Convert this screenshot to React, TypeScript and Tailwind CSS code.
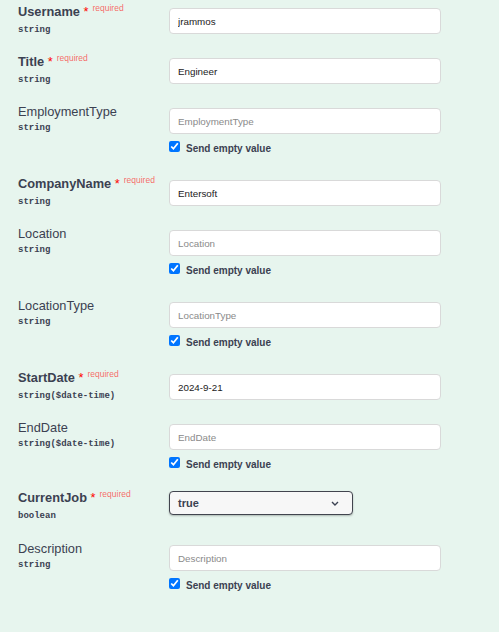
import React from "react";

type Param = {
  name: string;
  type: string;
  required?: boolean;
  value?: string;
  empty?: boolean;
  select?: boolean;
  h: string;
};

const PARAMS: Param[] = [
  { name: "Username", type: "string", required: true, value: "jrammos", h: "h-[50px]" },
  { name: "Title", type: "string", required: true, value: "Engineer", h: "h-[50px]" },
  { name: "EmploymentType", type: "string", empty: true, h: "h-[72px]" },
  { name: "CompanyName", type: "string", required: true, value: "Entersoft", h: "h-[50px]" },
  { name: "Location", type: "string", empty: true, h: "h-[72px]" },
  { name: "LocationType", type: "string", empty: true, h: "h-[72px]" },
  { name: "StartDate", type: "string($date-time)", required: true, value: "2024-9-21", h: "h-[50px]" },
  { name: "EndDate", type: "string($date-time)", empty: true, h: "h-[70px]" },
  { name: "CurrentJob", type: "boolean", required: true, select: true, h: "h-[51px]" },
  { name: "Description", type: "string", empty: true, h: "h-[72px]" },
];

function ParamRow({ p }: { p: Param }) {
  return (
    <div className={`flex ${p.h}`}>
      {/* nome + tipo */}
      <div className="w-[169px] shrink-0 pl-[18px]">
        <div
          className={`whitespace-nowrap text-[12.8px] leading-[15px] text-[#3b4151] ${
            p.required ? "font-bold" : ""
          }`}
        >
          {p.name}
          {p.required ? (
            <>
              <span className="font-normal text-[#ff0000]">&nbsp;*</span>
              <span className="relative top-[-5px] px-[4px] text-[8.5px] font-normal text-[rgba(255,0,0,0.6)]">
                required
              </span>
            </>
          ) : null}
        </div>
        <div className="mt-[4px] font-['Liberation_Mono',monospace] text-[9px] font-bold leading-[11px] text-[#3b4151]">
          {p.type}
        </div>
      </div>

      {/* valore */}
      <div className="flex flex-col">
        {p.select ? (
          <div className="mt-[1px] flex h-[24px] w-[184px] items-center justify-between rounded-[4px] border border-[#41444e] bg-[#f7f7f7] pl-[8px] pr-[13px] text-[11px] font-bold text-[#3b4151] shadow-[0_1px_2px_rgba(0,0,0,0.25)]">
            <span>true</span>
            <svg width="8" height="5" viewBox="0 0 8 5" fill="none">
              <path d="M1 1l3 3 3-3" stroke="#3b4151" strokeWidth="1.4" />
            </svg>
          </div>
        ) : (
          <input
            readOnly
            defaultValue={p.value ?? ""}
            placeholder={p.name}
            className="mt-[4px] h-[26px] w-[272px] rounded-[4px] border border-[#d9d9d9] bg-white px-[8px] text-[9.8px] text-[#1b1b1b] outline-none placeholder:text-[#8a8a8a]"
          />
        )}
        {p.empty ? (
          <label className="mt-[7px] flex items-start gap-[6px]">
            <input
              type="checkbox"
              defaultChecked
              className="m-0 h-[11px] w-[11px] accent-[#0075ff]"
            />
            <span className="mt-[2px] text-[10px] font-bold leading-[11px] text-[#3b4151]">
              Send empty value
            </span>
          </label>
        ) : null}
      </div>
    </div>
  );
}

export default function App() {
  return (
    <div className="h-[632px] w-[499px] overflow-hidden bg-[#e7f5ee] pt-[4px] font-['Liberation_Sans',Arial,sans-serif]">
      {PARAMS.map((p) => (
        <ParamRow key={p.name} p={p} />
      ))}
    </div>
  );
}
